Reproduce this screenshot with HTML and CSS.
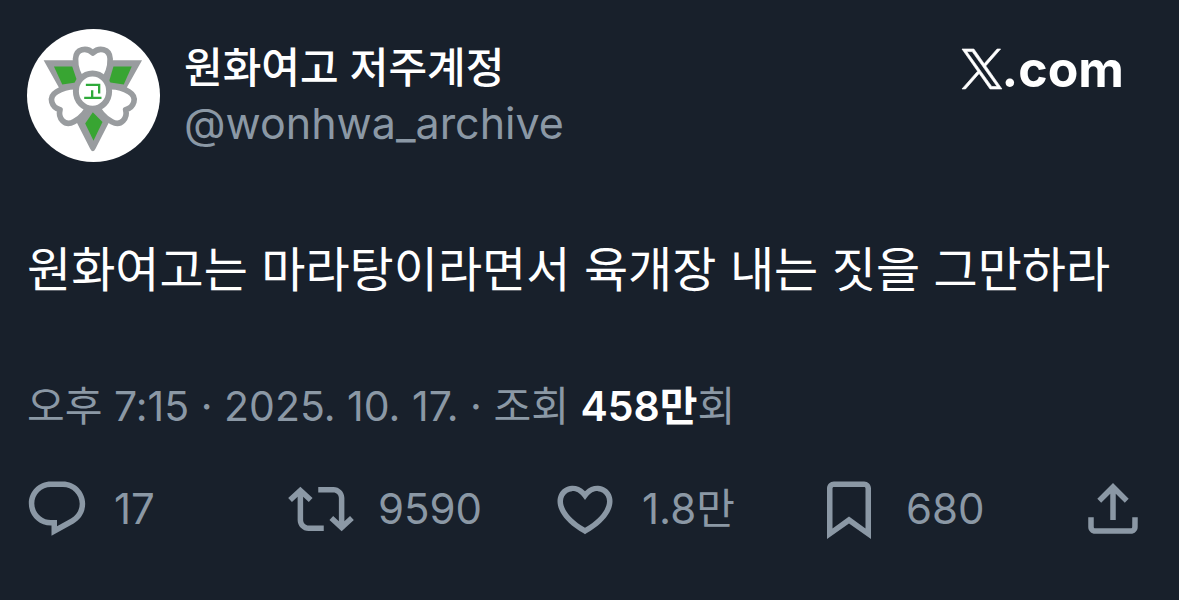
FILE: index.html
```html
<!DOCTYPE html>
<html lang="ko">
<head>
<meta charset="utf-8">
<meta name="viewport" content="width=device-width, initial-scale=1">
<title>원화여고 저주계정</title>
<link rel="stylesheet" href="styles.css">
</head>
<body>
<article class="post">
  <header class="post-header">
    <svg class="avatar" viewBox="26 26 400 400" role="img" aria-label="원화여고">
      <defs>
        <path id="petal" d="M196 186 C182 168 171 140 172 116 C173 84 206 80 224 98 C242 80 275 84 276 116 C277 140 266 168 252 186 Z"/>
      </defs>
      <circle cx="226" cy="226" r="200" fill="#fff"/>
      <path d="M76 120H372L324 206L232 386Q224 402 216 386L124 206Z" fill="#999c9f"/>
      <g fill="#fff" stroke="#999c9f" stroke-width="17" stroke-linejoin="round">
        <use href="#petal"/>
        <use href="#petal" transform="rotate(120 224 212)"/>
        <use href="#petal" transform="rotate(240 224 212)"/>
      </g>
      <g fill="#38a532">
        <path d="M107 139H162L178 186L132 193Z"/>
        <path d="M341 139H286L272 186L317 193Z"/>
        <path d="M224 276L253 306L226 362L201 310Z"/>
      </g>
      <ellipse cx="223" cy="213" rx="50" ry="53" fill="#fff" stroke="#999c9f" stroke-width="18"/>
      <path d="M203 194H243V220M222 210V232M198 233H250" fill="none" stroke="#2faa3b" stroke-width="7"/>
    </svg>
    <div class="author">
      <h1 class="name">원화여고 저주계정</h1>
      <a class="handle" href="#">@wonhwa_archive</a>
    </div>
    <a class="brand" href="#" aria-label="X.com">
      <svg class="brand-mark" viewBox="0 0 24 24" aria-hidden="true"><path d="M14.258 10.152L23.176 0h-2.113l-7.747 8.813L7.133 0H0l9.352 13.328L0 23.973h2.113l8.176-9.309 6.531 9.309h7.133zm-2.895 3.293l-.949-1.328L2.875 1.56h3.246l6.086 8.523.945 1.328 7.91 11.078h-3.246z"/></svg>
      <span>.com</span>
    </a>
  </header>
  <p class="body">원화여고는 마라탕이라면서 육개장 내는 짓을 그만하라</p>
  <p class="meta"><time datetime="2025-10-17T19:15">오후 7:15 · 2025. 10. 17.</time> · 조회 <strong>458만</strong>회</p>
  <div class="actions">
    <button class="action" type="button" aria-label="답글 17">
      <svg class="icon" viewBox="0 0 24 24" aria-hidden="true"><path d="M1.751 10c0-4.42 3.584-8 8.005-8h4.366c4.49 0 8.129 3.64 8.129 8.13 0 2.96-1.607 5.68-4.196 7.11l-8.054 4.46v-3.69h-.067c-4.49.1-8.183-3.51-8.183-8.01zm8.005-6c-3.317 0-6.005 2.69-6.005 6 0 3.37 2.77 6.08 6.138 6.01l.351-.01h1.761v2.3l5.087-2.81c1.951-1.08 3.163-3.13 3.163-5.36 0-3.39-2.744-6.13-6.129-6.13H9.756z"/></svg>
      <span>17</span>
    </button>
    <button class="action" type="button" aria-label="재게시 9590">
      <svg class="icon" viewBox="0 0 24 24" aria-hidden="true"><path d="M4.5 3.88l4.432 4.14-1.364 1.46L5.5 7.55V16c0 1.1.896 2 2 2H13v2H7.5c-2.209 0-4-1.79-4-4V7.55L1.432 9.48.068 8.02 4.5 3.88zM16.5 6H11V4h5.5c2.209 0 4 1.79 4 4v8.45l2.068-1.93 1.364 1.46-4.432 4.14-4.432-4.14 1.364-1.46 2.068 1.93V8c0-1.1-.896-2-2-2z"/></svg>
      <span>9590</span>
    </button>
    <button class="action" type="button" aria-label="마음에 들어요 1.8만">
      <svg class="icon" viewBox="0 0 24 24" aria-hidden="true"><path d="M16.697 5.5c-1.222-.06-2.679.51-3.89 2.16l-.805 1.09-.806-1.09C9.984 6.01 8.526 5.44 7.304 5.5c-1.243.07-2.349.78-2.91 1.91-.552 1.12-.633 2.78.479 4.82 1.074 1.97 3.257 4.27 7.129 6.61 3.87-2.34 6.052-4.64 7.126-6.61 1.111-2.04 1.03-3.7.477-4.82-.561-1.13-1.666-1.84-2.908-1.91zm4.187 7.69c-1.351 2.48-4.001 5.12-8.379 7.67l-.503.3-.504-.3c-4.379-2.55-7.029-5.19-8.382-7.67-1.36-2.5-1.41-4.86-.514-6.67.887-1.79 2.647-2.91 4.601-3.01 1.651-.09 3.368.56 4.798 2.01 1.429-1.45 3.146-2.1 4.796-2.01 1.954.1 3.714 1.22 4.601 3.01.896 1.81.846 4.17-.514 6.67z"/></svg>
      <span>1.8만</span>
    </button>
    <button class="action" type="button" aria-label="북마크 680">
      <svg class="icon" viewBox="0 0 24 24" aria-hidden="true"><path d="M4 4.5C4 3.12 5.119 2 6.5 2h11C18.881 2 20 3.12 20 4.5v18.44l-8-5.71-8 5.71V4.5zM6.5 4c-.276 0-.5.22-.5.5v14.56l6-4.29 6 4.29V4.5c0-.28-.224-.5-.5-.5h-11z"/></svg>
      <span>680</span>
    </button>
    <button class="action" type="button" aria-label="공유">
      <svg class="icon" viewBox="0 0 24 24" aria-hidden="true"><path d="M12 2.59l5.7 5.7-1.41 1.42L13 6.41V16h-2V6.41l-3.3 3.3-1.41-1.42L12 2.59zM21 15l-.02 3.51c0 1.38-1.12 2.49-2.5 2.49H5.5C4.11 21 3 19.88 3 18.5V15h2v3.5c0 .28.22.5.5.5h12.98c.28 0 .5-.22.5-.5L19 15h2z"/></svg>
    </button>
  </div>
</article>
</body>
</html>
```
FILE: styles.css
```css
* {
  box-sizing: border-box;
}

body {
  margin: 0;
  background: #18202b;
  color: #fff;
  font-family: Inter, "Noto Sans CJK KR", sans-serif;
}

a {
  color: inherit;
  text-decoration: none;
}

.post {
  padding: 29px 33px 56px 27px;
}

.post-header {
  display: flex;
  align-items: flex-start;
}

.avatar {
  flex: none;
  width: 133px;
  height: 133px;
}

.author {
  display: flex;
  flex: 1;
  flex-direction: column;
  padding: 11px 0 0 24px;
}

.name {
  margin: 0;
  font-size: 42px;
  font-weight: 500;
  line-height: 56px;
}

.author .handle {
  color: #8b98a5;
  font-size: 43px;
  line-height: 54px;
}

.brand {
  display: flex;
  align-items: center;
  margin-right: 22px;
  padding-top: 10px;
  font-size: 50px;
  font-weight: 700;
  line-height: 60px;
}

.brand-mark {
  width: 40px;
  height: 40px;
  fill: currentColor;
  stroke: currentColor;
  stroke-width: 0.4;
  overflow: visible;
}

.body {
  margin: 72px 0 0;
  font-size: 48px;
  line-height: 72px;
}

.meta {
  margin: 72px 0 0;
  color: #8b98a5;
  font-size: 41px;
  line-height: 56px;
}

.meta strong {
  color: #fff;
  font-weight: 600;
}

.actions {
  display: grid;
  grid-template-columns: repeat(4, 1fr) auto;
  margin: 42px 0 0 -3px;
}

.action {
  display: flex;
  align-items: center;
  gap: 24px;
  padding: 0;
  border: 0;
  background: none;
  color: #8b98a5;
  font: inherit;
  font-size: 42px;
  line-height: 58px;
}

.icon {
  flex: none;
  width: 66px;
  height: 66px;
  fill: currentColor;
}
```
